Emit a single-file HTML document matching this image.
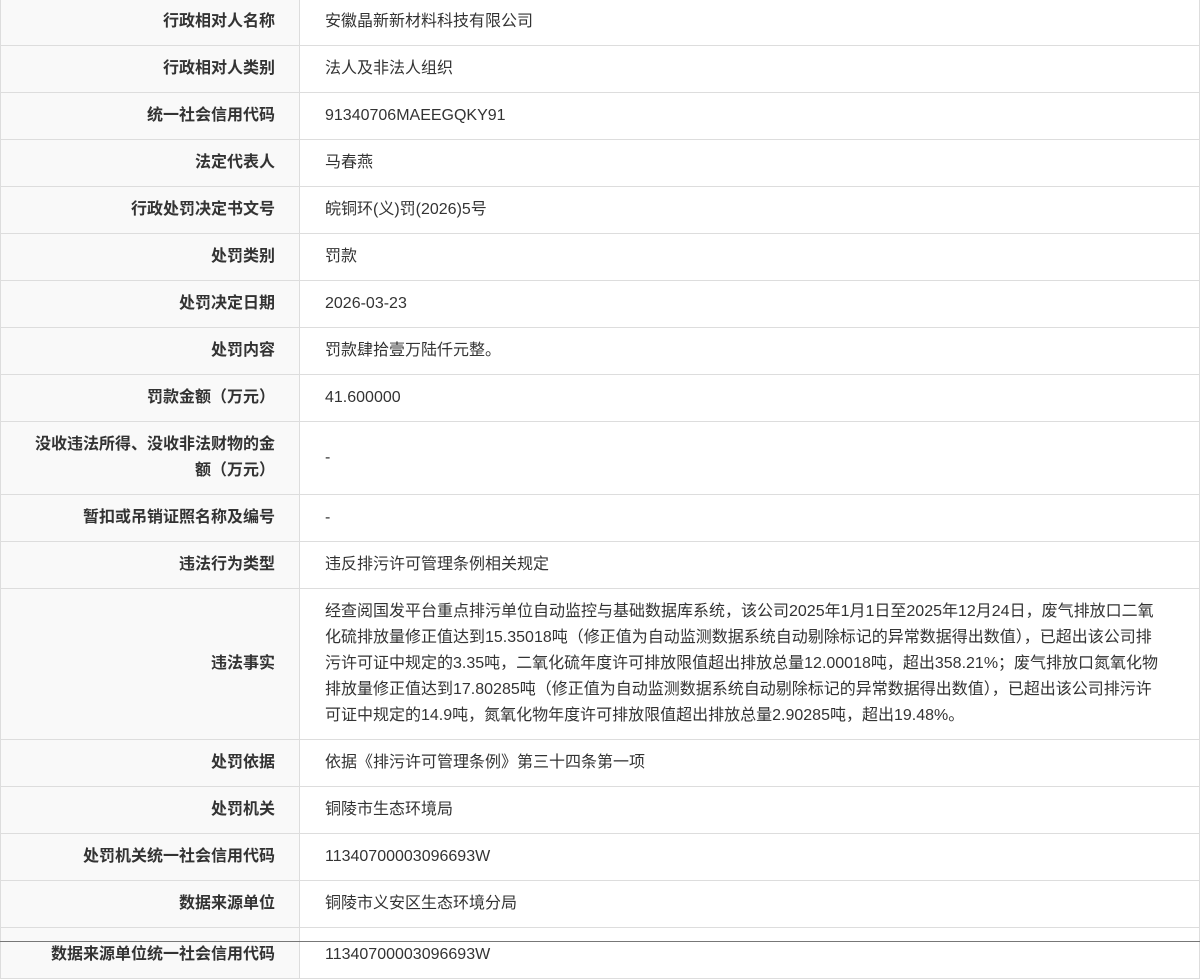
<!DOCTYPE html>
<html><head><meta charset="utf-8"><style>
body{margin:0;background:#fff;width:1200px;height:943px;overflow:hidden;position:relative;font-family:"Liberation Sans","Noto Sans CJK SC",sans-serif;font-size:16px;color:#333}
table{border-collapse:collapse;width:1200px;table-layout:fixed;margin-top:-1px}
td{border:1px solid #ddd;padding:10px 0;line-height:26px;vertical-align:middle}
tr:first-child td{padding-top:9px}
td.l{width:274px;background:#f9f9f9;text-align:right;font-weight:bold;padding-right:24px;padding-left:0}
td.r{padding-left:25px;padding-right:34px}
tr.last td{padding-top:14px;vertical-align:top}
.bar{position:absolute;left:0;top:942px;width:1200px;height:1px;background:#777}
</style></head><body>
<table>
<tr><td class="l">行政相对人名称</td><td class="r">安徽晶新新材料科技有限公司</td></tr>
<tr><td class="l">行政相对人类别</td><td class="r">法人及非法人组织</td></tr>
<tr><td class="l">统一社会信用代码</td><td class="r">91340706MAEEGQKY91</td></tr>
<tr><td class="l">法定代表人</td><td class="r">马春燕</td></tr>
<tr><td class="l">行政处罚决定书文号</td><td class="r">皖铜环(义)罚(2026)5号</td></tr>
<tr><td class="l">处罚类别</td><td class="r">罚款</td></tr>
<tr><td class="l">处罚决定日期</td><td class="r">2026-03-23</td></tr>
<tr><td class="l">处罚内容</td><td class="r">罚款肆拾壹万陆仟元整。</td></tr>
<tr><td class="l">罚款金额（万元）</td><td class="r">41.600000</td></tr>
<tr><td class="l" style="padding-left:30px">没收违法所得、没收非法财物的金额（万元）</td><td class="r">-</td></tr>
<tr><td class="l">暂扣或吊销证照名称及编号</td><td class="r">-</td></tr>
<tr><td class="l">违法行为类型</td><td class="r">违反排污许可管理条例相关规定</td></tr>
<tr><td class="l">违法事实</td><td class="r" style="white-space:nowrap">经查阅国发平台重点排污单位自动监控与基础数据库系统，该公司2025年1月1日至2025年12月24日，废气排放口二氧<br>化硫排放量修正值达到15.35018吨（修正值为自动监测数据系统自动剔除标记的异常数据得出数值），已超出该公司排<br>污许可证中规定的3.35吨，二氧化硫年度许可排放限值超出排放总量12.00018吨，超出358.21%；废气排放口氮氧化物<br>排放量修正值达到17.80285吨（修正值为自动监测数据系统自动剔除标记的异常数据得出数值），已超出该公司排污许<br>可证中规定的14.9吨，氮氧化物年度许可排放限值超出排放总量2.90285吨，超出19.48%。</td></tr>
<tr><td class="l">处罚依据</td><td class="r">依据《排污许可管理条例》第三十四条第一项</td></tr>
<tr><td class="l">处罚机关</td><td class="r">铜陵市生态环境局</td></tr>
<tr><td class="l">处罚机关统一社会信用代码</td><td class="r">11340700003096693W</td></tr>
<tr><td class="l">数据来源单位</td><td class="r">铜陵市义安区生态环境分局</td></tr>
<tr class="last"><td class="l">数据来源单位统一社会信用代码</td><td class="r">11340700003096693W</td></tr>
</table>
<div class="bar"></div>
</body></html>
